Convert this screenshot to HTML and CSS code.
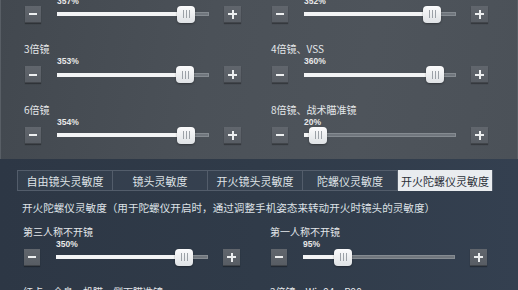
FILE: index.html
```html
<!DOCTYPE html>
<html lang="zh-CN">
<head>
<meta charset="utf-8">
<link rel="stylesheet" href="styles.css">
</head>
<body>
<div class="screen">
  <section class="panel-top">
    <div class="grid">
      <div class="setting">
        <div class="label"></div>
        <div class="value">357%</div>
        <div class="slider-row">
          <span class="btn minus"></span>
          <div class="track"><div class="fill" style="width:129px"></div><span class="thumb" style="left:120px"></span></div>
          <span class="btn plus"></span>
        </div>
      </div>
      <div class="setting">
        <div class="label"></div>
        <div class="value">352%</div>
        <div class="slider-row">
          <span class="btn minus"></span>
          <div class="track"><div class="fill" style="width:128px"></div><span class="thumb" style="left:119px"></span></div>
          <span class="btn plus"></span>
        </div>
      </div>
      <div class="setting">
        <div class="label">3倍镜</div>
        <div class="value">353%</div>
        <div class="slider-row">
          <span class="btn minus"></span>
          <div class="track"><div class="fill" style="width:128px"></div><span class="thumb" style="left:119px"></span></div>
          <span class="btn plus"></span>
        </div>
      </div>
      <div class="setting">
        <div class="label">4倍镜、VSS</div>
        <div class="value">360%</div>
        <div class="slider-row">
          <span class="btn minus"></span>
          <div class="track"><div class="fill" style="width:130.5px"></div><span class="thumb" style="left:121.5px"></span></div>
          <span class="btn plus"></span>
        </div>
      </div>
      <div class="setting">
        <div class="label">6倍镜</div>
        <div class="value">354%</div>
        <div class="slider-row">
          <span class="btn minus"></span>
          <div class="track"><div class="fill" style="width:128.5px"></div><span class="thumb" style="left:119.5px"></span></div>
          <span class="btn plus"></span>
        </div>
      </div>
      <div class="setting">
        <div class="label">8倍镜、战术瞄准镜</div>
        <div class="value">20%</div>
        <div class="slider-row">
          <span class="btn minus"></span>
          <div class="track"><div class="fill" style="width:13.5px"></div><span class="thumb" style="left:4.5px"></span></div>
          <span class="btn plus"></span>
        </div>
      </div>
    </div>
  </section>
  <section class="panel-bottom">
    <div class="tabs">
      <div class="tab">自由镜头灵敏度</div>
      <div class="tab">镜头灵敏度</div>
      <div class="tab">开火镜头灵敏度</div>
      <div class="tab">陀螺仪灵敏度</div>
      <div class="tab active">开火陀螺仪灵敏度</div>
    </div>
    <p class="desc">开火陀螺仪灵敏度（用于陀螺仪开启时，通过调整手机姿态来转动开火时镜头的灵敏度）</p>
    <div class="grid">
      <div class="setting">
        <div class="label">第三人称不开镜</div>
        <div class="value">350%</div>
        <div class="slider-row">
          <span class="btn minus"></span>
          <div class="track"><div class="fill" style="width:127.5px"></div><span class="thumb" style="left:118.5px"></span></div>
          <span class="btn plus"></span>
        </div>
      </div>
      <div class="setting">
        <div class="label">第一人称不开镜</div>
        <div class="value">95%</div>
        <div class="slider-row">
          <span class="btn minus"></span>
          <div class="track"><div class="fill" style="width:40px"></div><span class="thumb" style="left:31px"></span></div>
          <span class="btn plus"></span>
        </div>
      </div>
      <div class="setting">
        <div class="label">红点、全息、机瞄、侧面瞄准镜</div>
      </div>
      <div class="setting">
        <div class="label">2倍镜、Win94、P90</div>
      </div>
    </div>
  </section>
</div>
</body>
</html>
```

FILE: styles.css
```css
* { box-sizing: border-box; }
html, body { margin: 0; padding: 0; }
body {
  width: 518px;
  height: 290px;
  overflow: hidden;
  background: #2f3947;
  font-family: "Noto Sans CJK SC", "Noto Sans", sans-serif;
  color: #e3e6e9;
}
.screen {
  width: 518px;
  height: 290px;
  overflow: hidden;
}
.panel-top {
  margin-top: -17.5px;
  padding-bottom: 15.5px;
  background: linear-gradient(100deg, #42484f 0%, #4b5158 40%, #4e545b 70%, #4b5158 100%);
  border-left: 1px solid #585e65;
  border-right: 1px solid #585e65;
}
.grid {
  display: grid;
  grid-template-columns: 247px 247px;
  padding-left: 23px;
  row-gap: 20.5px;
}
.setting {
  display: flex;
  flex-direction: column;
}
.label {
  height: 12px;
  line-height: 12px;
  font-size: 10px;
  color: #e4e7ea;
  white-space: nowrap;
}
.value {
  margin-top: 2px;
  margin-left: 33px;
  height: 9px;
  line-height: 9px;
  font-family: "Liberation Sans", "DejaVu Sans", sans-serif;
  font-weight: bold;
  font-size: 8.5px;
  color: #e8e8e8;
}
.slider-row {
  display: flex;
  align-items: center;
  height: 17px;
}
.btn {
  position: relative;
  width: 16px;
  height: 17px;
  margin-left: 1px;
  background: linear-gradient(#61666d, #575c63);
  box-shadow: inset 0 -1px 0 rgba(0,0,0,0.25), 0 1px 1px rgba(0,0,0,0.3);
}
.btn::before {
  content: "";
  position: absolute;
  left: 4px;
  top: 7.5px;
  width: 8px;
  height: 2px;
  background: #eceeef;
}
.plus {
  width: 17px;
  margin-left: 15px;
}
.plus::before { left: 4px; width: 9px; }
.plus::after {
  content: "";
  position: absolute;
  left: 7.5px;
  top: 4px;
  width: 2px;
  height: 9px;
  background: #eceeef;
}
.track {
  position: relative;
  margin-left: 16px;
  width: 152px;
  height: 4px;
  background: #70767d;
  box-shadow: inset 0 0 0 1px #858b91;
}
.fill {
  height: 4px;
  background: #f3f4f5;
}
.thumb {
  position: absolute;
  top: -6.5px;
  width: 18px;
  height: 17px;
  border-radius: 4px;
  background: linear-gradient(#fbfbfc, #dfe2e5);
  box-shadow: 0 1px 2px rgba(0,0,0,0.35);
}
.thumb::before {
  content: "";
  position: absolute;
  left: 6px;
  top: 4.5px;
  width: 1px;
  height: 8px;
  background: #9ca1a7;
  box-shadow: 3px 0 0 #9ca1a7, 6px 0 0 #9ca1a7;
}
.panel-bottom {
  padding-top: 11px;
  background: linear-gradient(90deg, #2d3745 0%, #303b49 50%, #344050 100%);
}
.tabs {
  display: flex;
  margin-left: 17px;
  width: 476px;
  height: 21px;
  border-top: 1px solid #535d6b;
  border-bottom: 1px solid #535d6b;
  border-left: 1px solid #535d6b;
}
.tab {
  width: 95.2px;
  display: flex;
  align-items: center;
  justify-content: center;
  font-size: 11px;
  color: #dfe3e7;
  background: rgba(70, 82, 98, 0.25);
  border-right: 1px solid #535d6b;
  white-space: nowrap;
}
.tab.active {
  background: #e9ecef;
  color: #2b3038;
  margin-top: -1px;
  height: 21px;
}
.desc {
  margin: 9.5px 0 0 22px;
  height: 14px;
  line-height: 14px;
  font-size: 10.6px;
  color: #dde1e6;
  white-space: nowrap;
}
.panel-bottom .grid {
  margin-top: 11px;
}
```
